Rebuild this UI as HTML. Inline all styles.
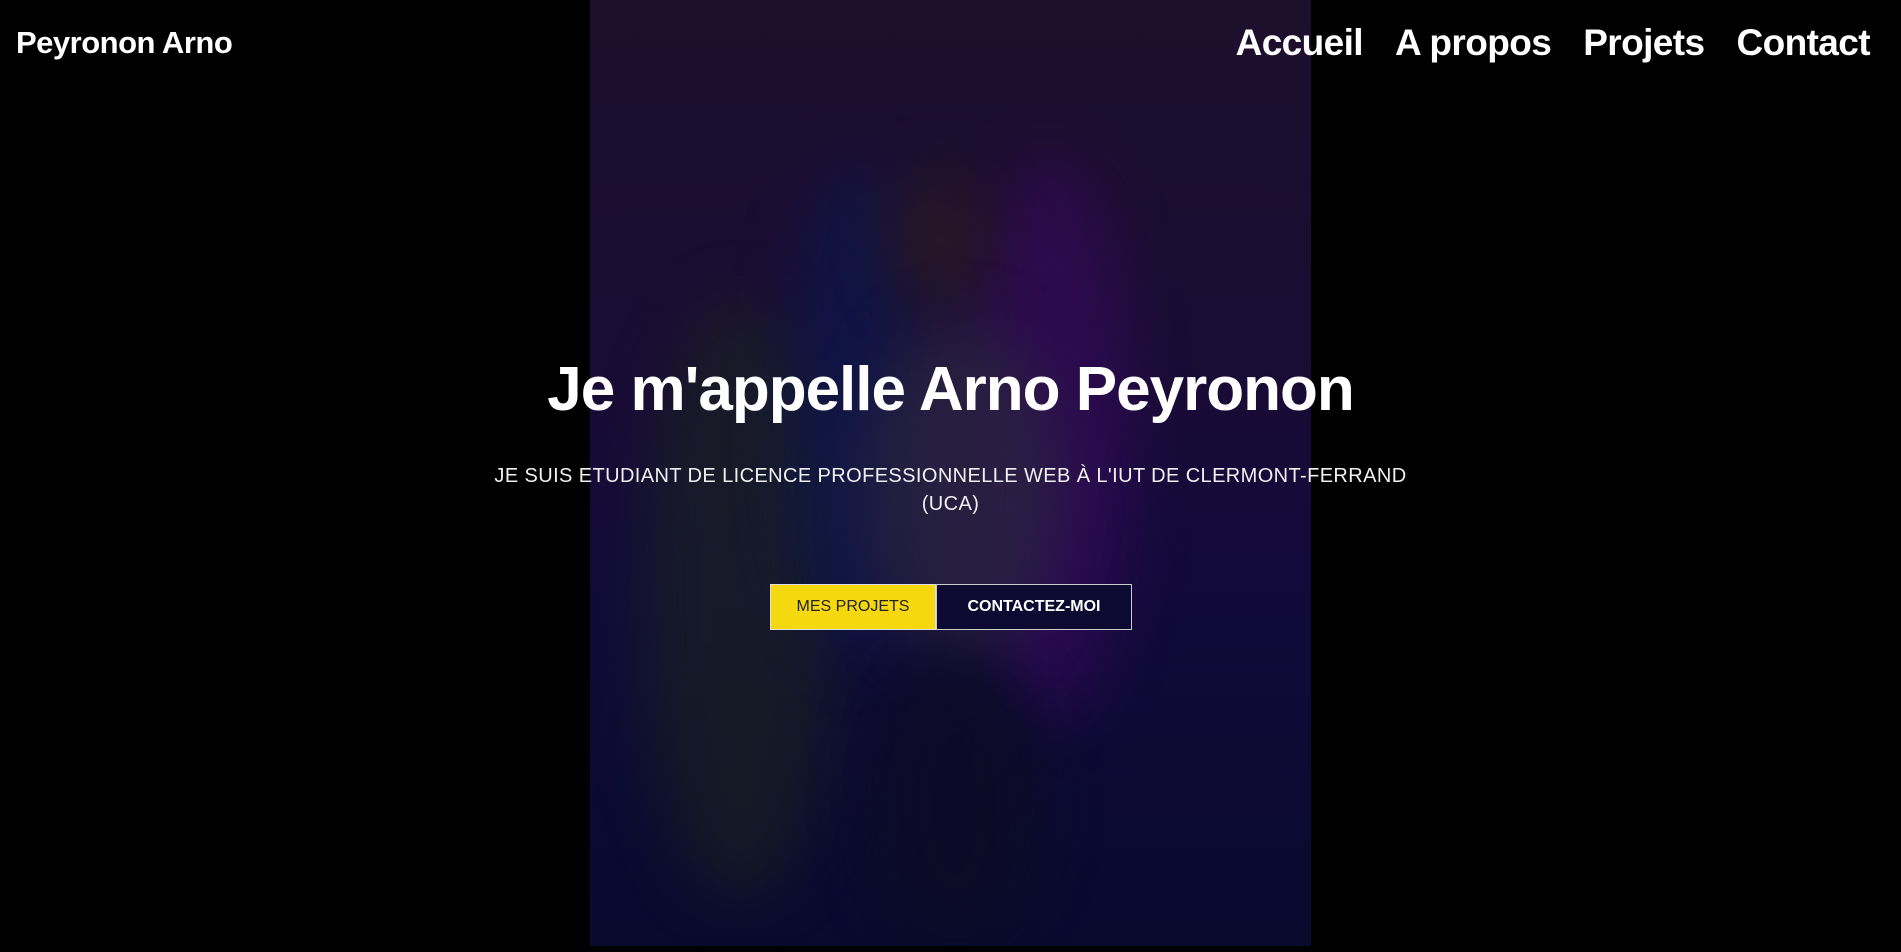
<!DOCTYPE html>
<html><head><meta charset="utf-8"><style>
*{margin:0;padding:0;box-sizing:border-box}
body{width:1901px;height:952px;background:#000;overflow:hidden;position:relative;font-family:"Liberation Sans",sans-serif;color:#fff}
.photo{position:absolute;left:590px;top:0;width:721px;height:946px;background:linear-gradient(180deg,#1e0f2c 0%,#1a0c34 35%,#120a3a 60%,#080a2e 100%);overflow:hidden}
.photo .b{position:absolute;border-radius:50%;filter:blur(30px)}
.logo{position:absolute;left:16px;top:25px;font-size:31px;font-weight:bold;letter-spacing:-0.5px}
nav{position:absolute;right:31px;top:22px;display:flex;gap:32px;font-size:37px;font-weight:bold;letter-spacing:-0.6px}
h1{position:absolute;left:0;width:1901px;top:354px;text-align:center;font-size:62px;font-weight:bold;letter-spacing:-1px}
p{position:absolute;left:470px;width:961px;top:462px;text-align:center;font-size:20px;line-height:28px;color:#f0f0f0;letter-spacing:0.4px}
.btn{position:absolute;top:584px;height:46px;display:flex;align-items:center;justify-content:center;font-size:16px}
.b1{left:770px;width:166px;background:#f5d80f;color:#222;border:1px solid #ddd}
.b2{left:936px;width:196px;background:#0c0a30;color:#fff;border:1px solid #ccc;font-weight:bold}
</style></head><body>
<div class="photo">
<div class="b" style="left:50px;top:300px;width:200px;height:600px;background:#1c2a1a;opacity:.5"></div>
<div class="b" style="left:200px;top:160px;width:130px;height:500px;background:#0a1a50;opacity:.6"></div>
<div class="b" style="left:380px;top:160px;width:160px;height:560px;background:#3a0a60;opacity:.6"></div>
<div class="b" style="left:300px;top:170px;width:100px;height:140px;background:#2a1a24;opacity:.8"></div>
<div class="b" style="left:270px;top:320px;width:200px;height:340px;background:#2a2440;opacity:.8"></div>
<div class="b" style="left:280px;top:650px;width:170px;height:300px;background:#0c0c26;opacity:.9"></div>
</div>
<div class="logo">Peyronon Arno</div>
<nav><span>Accueil</span><span>A propos</span><span>Projets</span><span>Contact</span></nav>
<h1>Je m'appelle Arno Peyronon</h1>
<p>JE SUIS ETUDIANT DE LICENCE PROFESSIONNELLE WEB À L'IUT DE CLERMONT-FERRAND (UCA)</p>
<div class="btn b1">MES PROJETS</div>
<div class="btn b2">CONTACTEZ-MOI</div>
</body></html>
